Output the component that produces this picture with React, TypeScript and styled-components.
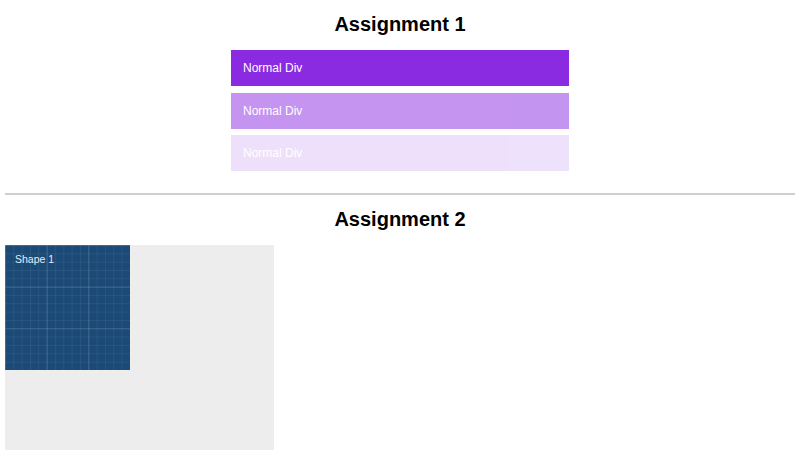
import styled, { createGlobalStyle } from 'styled-components';

const GlobalStyle = createGlobalStyle`
  body {
    margin: 0;
    background: #fff;
    font-family: "Liberation Sans", Arial, sans-serif;
  }
`;

const Page = styled.div`
  padding: 0 5px;
`;

const Heading = styled.h2`
  margin: 13px 0 14px;
  font-size: 20px;
  font-weight: 700;
  line-height: 23px;
  text-align: center;
  color: #000;
`;

const Stack = styled.div`
  display: flex;
  flex-direction: column;
  align-items: center;
  gap: 6.5px;
`;

const Block = styled.div<{ $fade: number }>`
  box-sizing: border-box;
  width: 338px;
  height: 36px;
  padding: 0 12px;
  display: flex;
  align-items: center;
  background: #8a2be2;
  color: #fff;
  font-size: 12px;
  opacity: ${p => p.$fade};
`;

const Divider = styled.hr`
  margin: 22px 0 0;
  border: 0;
  border-top: 2px solid #cfcfcf;
`;

const Canvas = styled.div`
  width: 269px;
  height: 205px;
  background: #ededed;
`;

const Shape = styled.div`
  box-sizing: border-box;
  width: 125px;
  height: 125px;
  padding: 8px 10px;
  font-size: 10.5px;
  color: #e4ecf5;
  background-color: #1b4a77;
  background-image:
    linear-gradient(rgba(255, 255, 255, 0.12) 1px, transparent 1px),
    linear-gradient(90deg, rgba(255, 255, 255, 0.12) 1px, transparent 1px),
    linear-gradient(rgba(255, 255, 255, 0.06) 1px, transparent 1px),
    linear-gradient(90deg, rgba(255, 255, 255, 0.06) 1px, transparent 1px);
  background-size: 41.67px 41.67px, 41.67px 41.67px, 8.33px 8.33px, 8.33px 8.33px;
`;

const fades = [1, 0.5, 0.14];

export default function App() {
  return (
    <>
      <GlobalStyle />
      <Page>
        <Heading>Assignment 1</Heading>
        <Stack>
          {fades.map((f, i) => (
            <Block key={i} $fade={f}>Normal Div</Block>
          ))}
        </Stack>
        <Divider />
        <Heading>Assignment 2</Heading>
        <Canvas>
          <Shape>Shape 1</Shape>
        </Canvas>
      </Page>
    </>
  );
}
